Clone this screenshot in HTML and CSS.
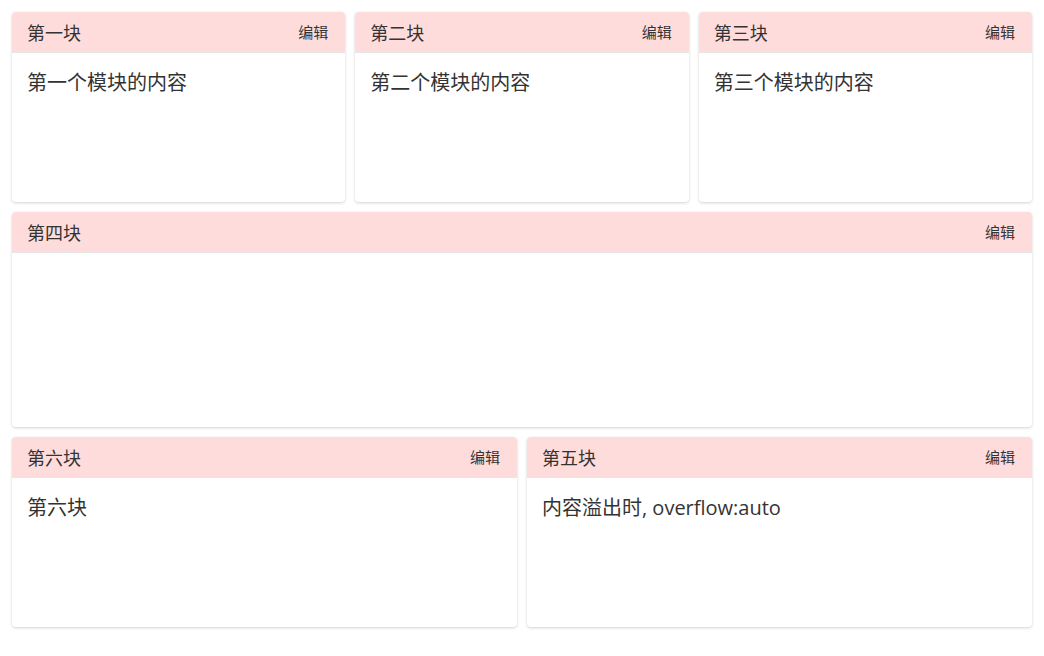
FILE: index.html
```html
<!DOCTYPE html>
<html lang="zh">
<head>
<meta charset="utf-8">
<link rel="stylesheet" href="styles.css">
</head>
<body>
<div class="page">
  <div class="row row-3">
    <div class="card">
      <div class="card-head"><span class="title">第一块</span><span class="edit">编辑</span></div>
      <div class="card-body">第一个模块的内容</div>
    </div>
    <div class="card">
      <div class="card-head"><span class="title">第二块</span><span class="edit">编辑</span></div>
      <div class="card-body">第二个模块的内容</div>
    </div>
    <div class="card">
      <div class="card-head"><span class="title">第三块</span><span class="edit">编辑</span></div>
      <div class="card-body">第三个模块的内容</div>
    </div>
  </div>
  <div class="row row-1">
    <div class="card">
      <div class="card-head"><span class="title">第四块</span><span class="edit">编辑</span></div>
      <div class="card-body"></div>
    </div>
  </div>
  <div class="row row-2">
    <div class="card">
      <div class="card-head"><span class="title">第六块</span><span class="edit">编辑</span></div>
      <div class="card-body">第六块</div>
    </div>
    <div class="card">
      <div class="card-head"><span class="title">第五块</span><span class="edit">编辑</span></div>
      <div class="card-body scroll">内容溢出时, overflow:auto</div>
    </div>
  </div>
</div>
</body>
</html>
```
FILE: styles.css
```css
* { box-sizing: border-box; }
html, body { margin: 0; padding: 0; background: #fff; }
body {
  font-family: "Open Sans", "Noto Sans CJK SC", sans-serif;
  color: #333;
}
.page {
  padding: 12px;
  display: flex;
  flex-direction: column;
  gap: 10px;
}
.row { display: grid; gap: 10px; }
.row-3 { grid-template-columns: 1fr 1fr 1fr; height: 190px; }
.row-1 { grid-template-columns: 1fr; height: 215px; }
.row-2 { grid-template-columns: 1fr 1fr; height: 190px; }
.card {
  background: #fff;
  border-radius: 4px;
  box-shadow: 0 1px 3px rgba(0,0,0,0.18);
  display: flex;
  flex-direction: column;
  overflow: hidden;
}
.card-head {
  height: 41px;
  flex: none;
  background: #ffdcdc;
  border-bottom: 1px solid #e6e6e6;
  display: flex;
  align-items: center;
  justify-content: space-between;
  padding: 0 17px 1px 15px;
}
.title { font-size: 18px; color: #333; }
.edit { font-size: 15px; color: #333; }
.card-body {
  flex: 1;
  padding: 15px;
  font-size: 20px;
  line-height: 30px;
  color: #333;
}
.scroll { overflow: auto; }
```
